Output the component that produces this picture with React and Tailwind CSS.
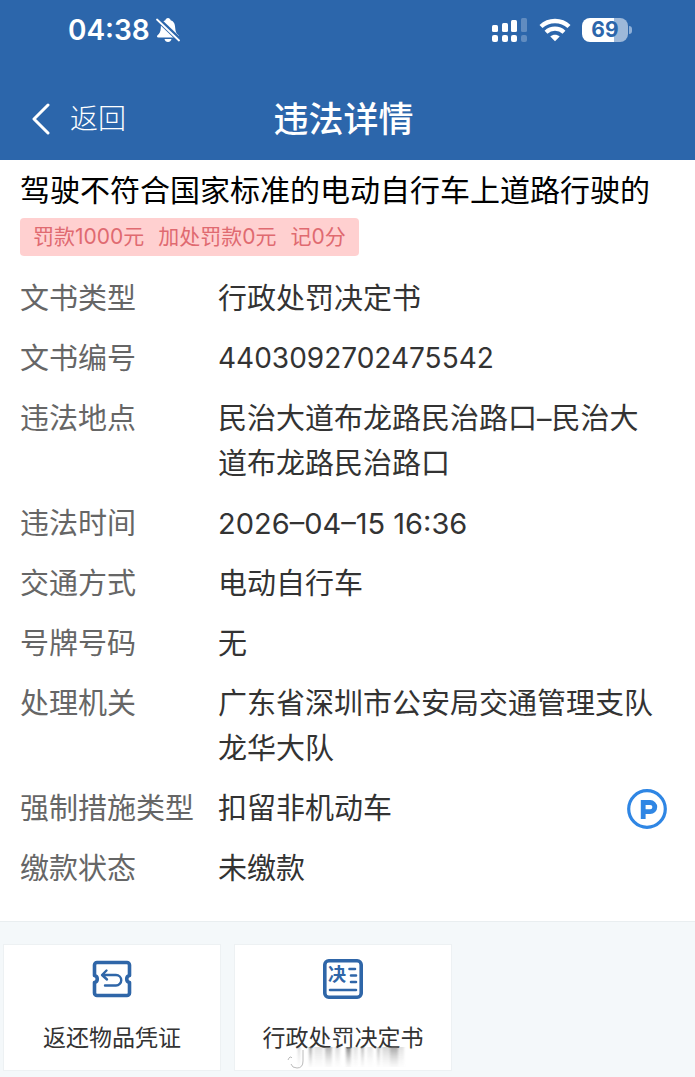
import React from 'react';

const DETAILS = [
    { label: '文书类型', value: '行政处罚决定书' },
    { label: '文书编号', value: '4403092702475542', numeric: true },
    { label: '违法地点', value: '民治大道布龙路民治路口–民治大道布龙路民治路口' },
    { label: '违法时间', value: '2026–04–15 16:36' },
    { label: '交通方式', value: '电动自行车' },
    { label: '号牌号码', value: '无' },
    { label: '处理机关', value: '广东省深圳市公安局交通管理支队龙华大队' },
    { label: '强制措施类型', value: '扣留非机动车', parking: true },
    { label: '缴款状态', value: '未缴款' },
];

const PENALTIES = ['罚款1000元', '加处罚款0元', '记0分'];

const MutedBell = () => (
    <svg className="h-6 w-6" viewBox="0 0 24 24" fill="none" aria-hidden="true">
        <path d="M12 0c-1.500 0-2.300 1-2.600 2.200C6 3.300 5 6 4.800 10c-.2 4-1.300 5.500-3.300 7.200-.9.900-.6 2.300.8 2.300h19.400c1.400 0 1.700-1.400.8-2.300-2-1.700-3.100-3.200-3.300-7.200-.2-4-1.200-6.700-4.600-7.800C14.300 1 13.500 0 12 0Z" fill="#fff" />
        <path d="M8.500 21h7c-.4 1.800-1.700 3-3.500 3s-3.100-1.200-3.500-3Z" fill="#fff" />
        <path d="M1 .5 24 22.500" stroke="#2c66ab" strokeWidth="5" />
        <path d="M1 1.500 23 22.500" stroke="#fff" strokeWidth="1.800" strokeLinecap="round" />
    </svg>
);

const Signal = () => (
    <svg className="h-6 w-9" viewBox="0 0 36 24" fill="#fff" aria-hidden="true">
        <rect x="0" y="7" width="6" height="7" rx="1.500" />
        <rect x="10" y="5" width="6" height="9" rx="1.500" />
        <rect x="19" y="2" width="6" height="12" rx="1.500" />
        <rect x="29" y="0" width="6" height="14" rx="1.500" opacity=".25" />
        <rect x="0" y="17" width="6" height="7" rx="2" />
        <rect x="10" y="17" width="6" height="7" rx="2" />
        <rect x="19" y="17" width="6" height="7" rx="2" />
        <rect x="29" y="17" width="6" height="7" rx="2" opacity=".25" />
    </svg>
);

const Wifi = () => (
    <svg className="h-6 w-8" viewBox="0 0 32 24" fill="none" stroke="#fff" aria-hidden="true">
        <path d="M2 8.500C9.700 1.200 22.300 1.200 30 8.500" strokeWidth="4.400" />
        <path d="M7 14.200c5-4.700 13-4.700 18 0" strokeWidth="4.200" />
        <path d="M11.300 18.500c2.700-2.400 6.700-2.400 9.400 0L16 23.200Z" fill="#fff" stroke="none" />
    </svg>
);

const Battery = () => (
    <div className="flex items-center gap-px">
        <div className="flex h-6 w-[46px] items-center justify-center rounded-lg bg-linear-to-r from-white from-69% to-[#9db8d9] to-69% text-[21px] font-bold text-[#2c66ab]">
            69
        </div>
        <div className="h-2 w-[3px] rounded-r-full bg-[#8fb0d8]"></div>
    </div>
);

const ReturnTicket = () => (
    <svg className="h-10 w-10" viewBox="0 0 40 40" fill="none" stroke="#2f66a8" strokeLinecap="round" strokeLinejoin="round" aria-hidden="true">
        <path d="M5 3.500h30a2.500 2.500 0 0 1 2.500 2.500v10.500a3.600 3.600 0 0 0 0 7V34a2.500 2.500 0 0 1-2.500 2.500H5A2.500 2.500 0 0 1 2.500 34V23.500a3.600 3.600 0 0 0 0-7V6A2.500 2.500 0 0 1 5 3.500Z" strokeWidth="3.600" />
        <path d="M14.500 11.500 10 16l5 4.500M10.500 16H24a5 5 0 0 1 0 10.500H13" strokeWidth="2.400" />
    </svg>
);

const DecisionIcon = () => (
    <svg className="h-10 w-10" viewBox="0 0 40 40" fill="none" stroke="#2f66a8" strokeLinecap="round" aria-hidden="true">
        <rect x="1.800" y="1.800" width="36.400" height="36.400" rx="4" strokeWidth="3.600" />
        <text x="5" y="22" fontSize="18" fontWeight="700" fill="#2f66a8" stroke="none">决</text>
        <path d="M26.500 10H32M28 16.500h5M28 23h5M7 31h26" strokeWidth="2.600" />
    </svg>
);

const ParkingIcon = () => (
    <svg className="h-10 w-10" viewBox="0 0 40 40" fill="none" stroke="#2f86e4" aria-hidden="true">
        <circle cx="20" cy="20" r="18.300" strokeWidth="3.200" />
        <path d="M16.200 30V13.500h7a4.400 4.400 0 0 1 0 9.200h-7" strokeWidth="4.800" />
    </svg>
);

const ACTIONS = [
    { label: '返还物品凭证', Icon: ReturnTicket },
    { label: '行政处罚决定书', Icon: DecisionIcon },
];

const STREAKS = [
    { x: 11, width: 2, opacity: 0.4 },
    { x: 22, width: 3, opacity: 0.8 },
    { x: 27, width: 9, opacity: 0.25 },
    { x: 38, width: 7, opacity: 0.65 },
    { x: 48, width: 5, opacity: 0.3 },
    { x: 59, width: 5, opacity: 1 },
    { x: 66, width: 5, opacity: 0.25 },
    { x: 74, width: 3, opacity: 0.6 },
    { x: 80, width: 6, opacity: 0.2 },
    { x: 90, width: 3, opacity: 0.6 },
    { x: 95, width: 8, opacity: 0.35 },
    { x: 103, width: 8, opacity: 0.75 },
    { x: 111, width: 6, opacity: 0.25 },
];

// Faded streaks under the second card's label
const Streaks = () => (
    <svg className="absolute bottom-0 left-[52px] h-7 w-[120px]" viewBox="0 0 120 28" aria-hidden="true">
        <defs>
            <linearGradient id="streak" x1="0" y1="0" x2="0" y2="1">
                <stop offset="0" stopColor="#777" stopOpacity=".9" />
                <stop offset="1" stopColor="#bbb" stopOpacity=".1" />
            </linearGradient>
            <filter id="soften">
                <feGaussianBlur stdDeviation="1 0.3" />
            </filter>
        </defs>
        <g fill="url(#streak)" filter="url(#soften)">
            {STREAKS.map(({ x, width, opacity }) => (
                <rect key={x} x={x} y="5" width={width} height="20" opacity={opacity} />
            ))}
        </g>
        <path d="M1 18q2-5 4-2M4 22q1 4 6 4 6 0 6-7V8" fill="none" stroke="#bbb" />
    </svg>
);

const App = () => {
    return (
        <div className="min-h-screen bg-[#f4f8fa] font-['Inter','Noto_Sans_CJK_SC',sans-serif]">
            <header className="bg-[#2c66ab] text-white">
                <div className="flex h-[60px] items-center justify-between pr-[63px] pl-[68px]">
                    <div className="flex items-center gap-[6px]">
                        <span className="text-[28px] font-semibold">04:38</span>
                        <MutedBell />
                    </div>
                    <div className="flex items-center gap-[11px]">
                        <Signal />
                        <Wifi />
                        <Battery />
                    </div>
                </div>
                <div className="grid h-[100px] grid-cols-[1fr_auto_1fr] items-center pt-[18px] pr-10 pl-8">
                    <button type="button" className="flex items-center gap-5 text-[28px] font-light">
                        <svg className="h-8 w-[18px]" viewBox="0 0 18 32" fill="none" stroke="#fff" strokeWidth="3" strokeLinecap="round" strokeLinejoin="round" aria-hidden="true">
                            <path d="M16 2 2 16l14 14" />
                        </svg>
                        返回
                    </button>
                    <h1 className="text-[35px] font-medium">违法详情</h1>
                </div>
            </header>

            <main className="border-b border-[#e9eef0] bg-white px-5 pb-[30px]">
                <h2 className="pt-2 text-[30px] leading-[45px] text-black">驾驶不符合国家标准的电动自行车上道路行驶的</h2>
                <div className="mt-[5px] flex h-[38px] w-fit items-center gap-[14px] rounded-[4px] bg-[#ffd0d0] px-[13px] text-[21px] text-[#e06a70]">
                    {PENALTIES.map((item) => (
                        <span key={item}>{item}</span>
                    ))}
                </div>
                <dl className="mt-5 flex flex-col gap-[15px] text-[29px] leading-[45px]">
                    {DETAILS.map(({ label, value, numeric, parking }) => (
                        <div key={label} className="flex items-center">
                            <dt className="w-[198px] shrink-0 self-start text-[#666]">{label}</dt>
                            <dd className={numeric ? 'flex-1 text-[28px] text-[#333]' : 'flex-1 pr-5 text-[#333]'}>{value}</dd>
                            {parking && (
                                <button type="button" aria-label="停车" className="mr-2">
                                    <ParkingIcon />
                                </button>
                            )}
                        </div>
                    ))}
                </dl>
            </main>

            <div className="grid grid-cols-3 gap-[13px] pt-[22px] pr-3 pb-[7px] pl-[3px]">
                {ACTIONS.map(({ label, Icon }, index) => (
                    <button key={label} type="button" className="relative flex h-[127px] flex-col items-center gap-[22px] border border-[#edf1f3] bg-white pt-[14px] text-[23px] text-[#333]">
                        <Icon />
                        {label}
                        {index === 1 && <Streaks />}
                    </button>
                ))}
            </div>
        </div>
    );
};

export default App;
